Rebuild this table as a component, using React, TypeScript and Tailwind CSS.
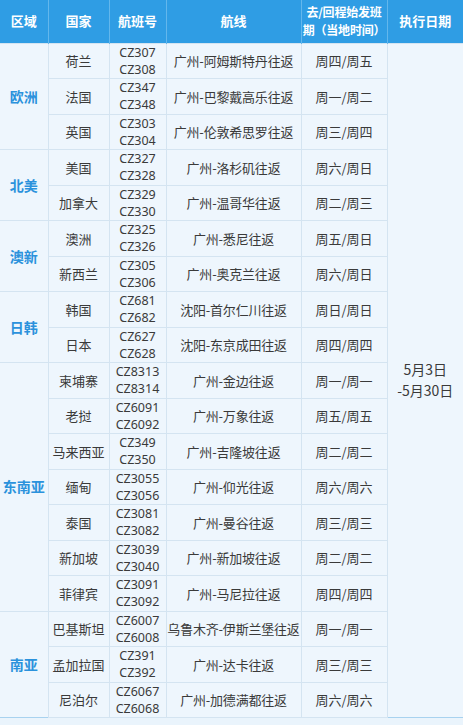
const rows = [
  { region: "欧洲", items: [
    ["荷兰", "CZ307", "CZ308", "广州-阿姆斯特丹往返", "周四/周五"],
    ["法国", "CZ347", "CZ348", "广州-巴黎戴高乐往返", "周一/周二"],
    ["英国", "CZ303", "CZ304", "广州-伦敦希思罗往返", "周三/周四"],
  ] },
  { region: "北美", items: [
    ["美国", "CZ327", "CZ328", "广州-洛杉矶往返", "周六/周日"],
    ["加拿大", "CZ329", "CZ330", "广州-温哥华往返", "周二/周三"],
  ] },
  { region: "澳新", items: [
    ["澳洲", "CZ325", "CZ326", "广州-悉尼往返", "周五/周日"],
    ["新西兰", "CZ305", "CZ306", "广州-奥克兰往返", "周六/周日"],
  ] },
  { region: "日韩", items: [
    ["韩国", "CZ681", "CZ682", "沈阳-首尔仁川往返", "周日/周日"],
    ["日本", "CZ627", "CZ628", "沈阳-东京成田往返", "周四/周四"],
  ] },
  { region: "东南亚", items: [
    ["柬埔寨", "CZ8313", "CZ8314", "广州-金边往返", "周一/周一"],
    ["老挝", "CZ6091", "CZ6092", "广州-万象往返", "周五/周五"],
    ["马来西亚", "CZ349", "CZ350", "广州-吉隆坡往返", "周二/周二"],
    ["缅甸", "CZ3055", "CZ3056", "广州-仰光往返", "周六/周六"],
    ["泰国", "CZ3081", "CZ3082", "广州-曼谷往返", "周三/周三"],
    ["新加坡", "CZ3039", "CZ3040", "广州-新加坡往返", "周二/周二"],
    ["菲律宾", "CZ3091", "CZ3092", "广州-马尼拉往返", "周四/周四"],
  ] },
  { region: "南亚", items: [
    ["巴基斯坦", "CZ6007", "CZ6008", "乌鲁木齐-伊斯兰堡往返", "周一/周一"],
    ["孟加拉国", "CZ391", "CZ392", "广州-达卡往返", "周三/周三"],
    ["尼泊尔", "CZ6067", "CZ6068", "广州-加德满都往返", "周六/周六"],
  ] },
];

const total = rows.reduce((n, g) => n + g.items.length, 0);

export default function App() {
  return (
    <div
      className="w-[463px] h-[725px] bg-[#eaf4fc] overflow-hidden"
      style={{ fontFamily: '"Noto Sans CJK SC", "Noto Sans", sans-serif' }}
    >
      <table className="w-[463px] table-fixed border-collapse text-[13px] text-[#3a3a3a] border-b border-[#a8d2ef]">
        <colgroup>
          <col className="w-[48px]" />
          <col className="w-[61px]" />
          <col className="w-[57px]" />
          <col className="w-[135px]" />
          <col className="w-[86px]" />
          <col className="w-[76px]" />
        </colgroup>
        <thead>
          <tr className="h-[43px] bg-[#2f9de4] text-white text-[13px] leading-[18px]">
            <th className="p-0 border-r border-[#63b7ec] font-bold">区域</th>
            <th className="p-0 border-r border-[#63b7ec] font-bold">国家</th>
            <th className="p-0 border-r border-[#63b7ec] font-bold">航班号</th>
            <th className="p-0 border-r border-[#63b7ec] font-bold">航线</th>
            <th className="p-0 border-r border-[#63b7ec] font-bold text-[12px] leading-[18px] tracking-[-0.2px] whitespace-nowrap">
              <div>去/回程始发班</div>
              <div>期（当地时间）</div>
            </th>
            <th className="p-0 font-bold">执行日期</th>
          </tr>
        </thead>
        <tbody className="bg-[#eef6fd]">
          {rows.map((g, gi) =>
            g.items.map((it, i) => (
              <tr key={`${gi}-${i}`} className="h-[35.5px]">
                {i === 0 && (
                  <td
                    rowSpan={g.items.length}
                    className="p-0 border-r border-t border-[#d4e4f1] text-center font-bold text-[14px] text-[#2b92dc]"
                  >
                    {g.region}
                  </td>
                )}
                <td className="p-0 border border-[#d4e4f1] text-center whitespace-nowrap">{it[0]}</td>
                <td
                  className="p-0 border border-[#d4e4f1] text-center text-[12.5px] leading-[17px] whitespace-nowrap"
                  style={{ fontFamily: '"Noto Sans", sans-serif' }}
                >
                  <div>{it[1]}</div>
                  <div>{it[2]}</div>
                </td>
                <td className="p-0 border border-[#d4e4f1] text-center whitespace-nowrap tracking-[-0.2px]">{it[3]}</td>
                <td className="p-0 border border-[#d4e4f1] text-center whitespace-nowrap">{it[4]}</td>
                {gi === 0 && i === 0 && (
                  <td
                    rowSpan={total}
                    className="p-0 border-l border-t border-[#d4e4f1] text-center leading-[21px] text-[14px]"
                  >
                    <div>5月3日</div>
                    <div>-5月30日</div>
                  </td>
                )}
              </tr>
            ))
          )}
        </tbody>
      </table>
    </div>
  );
}
